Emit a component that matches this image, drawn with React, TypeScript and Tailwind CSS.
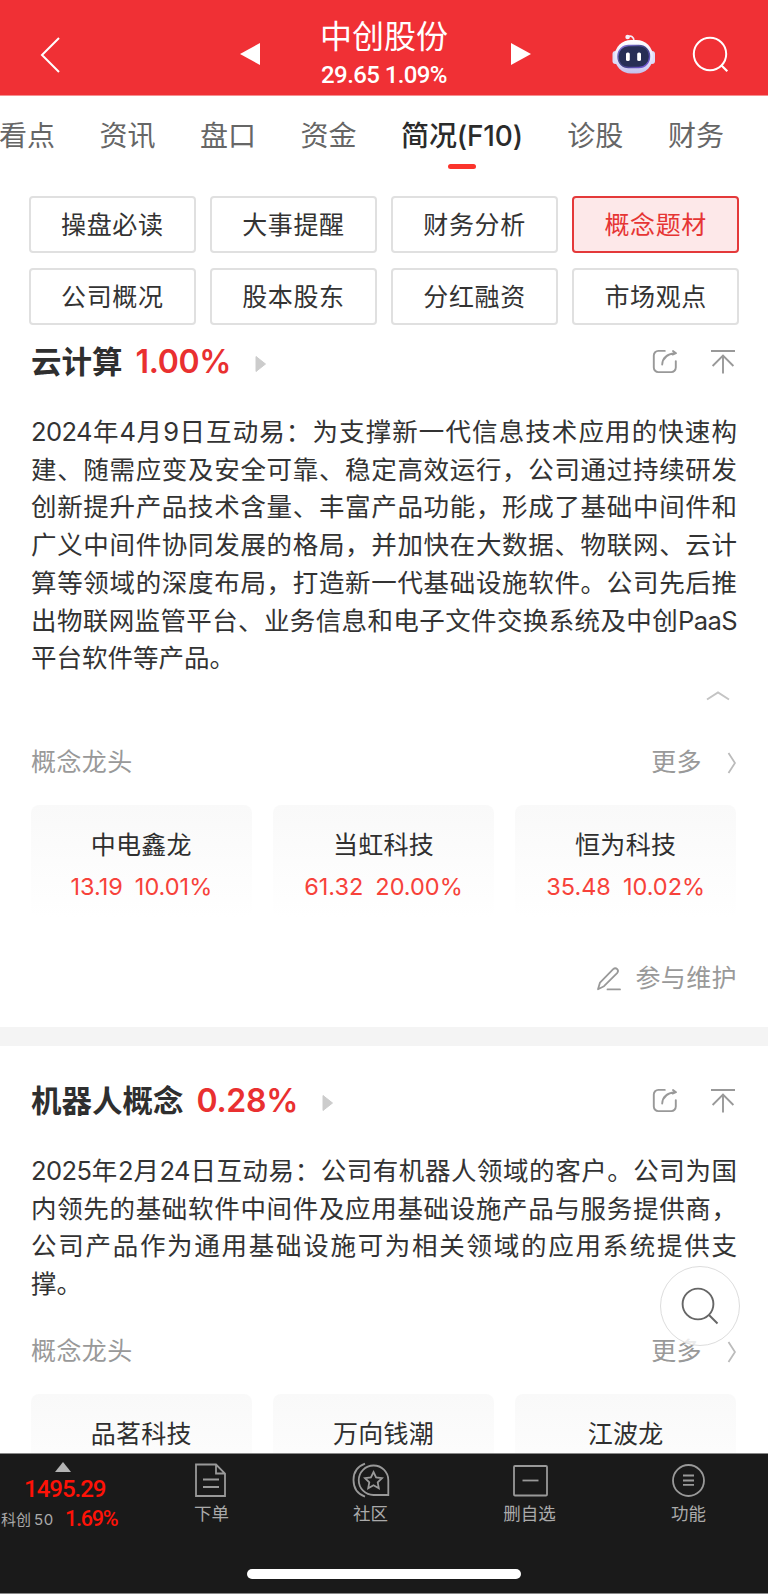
import clsx from 'clsx'
import { ReactNode } from 'react'

interface Stock {
  name: string
  price?: string
  change?: string
}

interface ConceptProps {
  title: string
  change: string
  lines: string[]
  stocks: Stock[]
  collapsible?: boolean
}

const TABS = ['看点', '资讯', '盘口', '资金', '简况(F10)', '诊股', '财务']
const ACTIVE_TAB = '简况(F10)'

const FILTERS = [
  '操盘必读',
  '大事提醒',
  '财务分析',
  '概念题材',
  '公司概况',
  '股本股东',
  '分红融资',
  '市场观点',
]
const ACTIVE_FILTER = '概念题材'

const CLOUD_LINES = [
  '2024年4月9日互动易：为支撑新一代信息技术应用的快速构',
  '建、随需应变及安全可靠、稳定高效运行，公司通过持续研发',
  '创新提升产品技术含量、丰富产品功能，形成了基础中间件和',
  '广义中间件协同发展的格局，并加快在大数据、物联网、云计',
  '算等领域的深度布局，打造新一代基础设施软件。公司先后推',
  '出物联网监管平台、业务信息和电子文件交换系统及中创PaaS',
  '平台软件等产品。',
]

const ROBOT_LINES = [
  '2025年2月24日互动易：公司有机器人领域的客户。公司为国',
  '内领先的基础软件中间件及应用基础设施产品与服务提供商，',
  '公司产品作为通用基础设施可为相关领域的应用系统提供支',
  '撑。',
]

const CLOUD_STOCKS: Stock[] = [
  { name: '中电鑫龙', price: '13.19', change: '10.01%' },
  { name: '当虹科技', price: '61.32', change: '20.00%' },
  { name: '恒为科技', price: '35.48', change: '10.02%' },
]

const ROBOT_STOCKS: Stock[] = [
  { name: '品茗科技' },
  { name: '万向钱潮' },
  { name: '江波龙' },
]

function RobotIcon() {
  return (
    <svg width="44" height="42" viewBox="0 0 44 42" fill="none">
      <defs>
        <linearGradient id="shell" x1="0" y1="0" x2="0" y2="1">
          <stop offset="0" stopColor="#ffffff" />
          <stop offset="0.6" stopColor="#e4e2fa" />
          <stop offset="1" stopColor="#c3c0ec" />
        </linearGradient>
        <linearGradient id="rim" x1="0" y1="0" x2="1" y2="1">
          <stop offset="0" stopColor="#8f7be8" />
          <stop offset="0.5" stopColor="#3a3f78" />
          <stop offset="1" stopColor="#7d5be6" />
        </linearGradient>
      </defs>
      <path d="M16 4c3-2 6 0 6 4" stroke="#f3e9f6" strokeWidth="1.6" />
      <circle cx="15.6" cy="4" r="2.3" fill="#f6eef8" />
      <rect x="0.5" y="18" width="6" height="13" rx="3" fill="#dcdcf7" />
      <rect x="37" y="18" width="6" height="13" rx="3" fill="#dcdcf7" />
      <rect x="2.5" y="7" width="38.5" height="33.5" rx="16.5" fill="url(#shell)" />
      <rect x="6" y="12.5" width="31.5" height="22" rx="10.5" fill="#272e55" stroke="url(#rim)" strokeWidth="1.4" />
      <rect x="14" y="19.5" width="3.8" height="8.5" rx="1.6" fill="#fff" />
      <rect x="25.2" y="19.5" width="3.8" height="8.5" rx="1.6" fill="#fff" />
    </svg>
  )
}

function ShareIcon() {
  return (
    <svg width="26" height="26" viewBox="0 0 26 26" fill="none" stroke="#999" strokeWidth="1.9" strokeLinecap="round">
      <path d="M12.800 1.900H6.300a4.500 4.500 0 0 0-4.500 4.500v12.200a4.500 4.500 0 0 0 4.500 4.500h13a4.500 4.500 0 0 0 4.500-4.500v-6.500" />
      <path d="M10.200 15.500C10.600 9.400 15 5 23 4.200M21 2l3 2.200-3.400 1.300" strokeLinejoin="round" />
    </svg>
  )
}

function ToTopIcon() {
  return (
    <svg width="26" height="26" viewBox="0 0 26 26" fill="none" stroke="#999" strokeWidth="1.9">
      <path d="M1 2h24M13 6v18.500M2.600 17L13 6.600 23.400 17" />
    </svg>
  )
}

function PenIcon() {
  return (
    <svg width="26" height="26" viewBox="0 0 26 26" fill="none" stroke="#999" strokeWidth="1.800" strokeLinecap="round" strokeLinejoin="round">
      <path d="M2 23.200l2-6.600L17.200 3.200c1.300-1.200 3-1 4 0 1 1.100 1 2.700-.1 3.900L8 20.200z" />
      <path d="M11.500 23.400H24" />
    </svg>
  )
}

function Header() {
  return (
    <header className="flex h-[95.500px] shrink-0 items-center border-b border-[#f58f90] bg-[#f03035] text-white">
      <svg width="22" height="38" viewBox="0 0 22 38" fill="none" stroke="#fff" strokeWidth="2" className="ml-[39px] mt-[15px]">
        <path d="M20 2L3 19l17 17" />
      </svg>
      <svg width="21" height="24" viewBox="0 0 21 24" fill="#fff" className="ml-[179px] mt-[14px]">
        <path d="M0 12L20 1v22z" />
      </svg>
      <div className="ml-[42px] flex w-[162px] flex-col items-center pt-[14px]">
        <h1 className="text-[32px] leading-[40px]">中创股份</h1>
        <p className="mt-[1px] font-[Roboto] text-2xl font-medium leading-[34px] tracking-[-0.600px] whitespace-nowrap">
          29.65 1.09%
        </p>
      </div>
      <svg width="21" height="24" viewBox="0 0 21 24" fill="#fff" className="ml-[45px] mt-[14px]">
        <path d="M21 12L1 1v22z" />
      </svg>
      <div className="ml-[81px] mt-[13px]">
        <RobotIcon />
      </div>
      <svg width="38" height="38" viewBox="0 0 38 38" fill="none" stroke="#fff" className="ml-[36px] mt-[15px]">
        <circle cx="18" cy="18" r="16.200" strokeWidth="2" />
        <path d="M29 29l6.300 6.200" strokeWidth="2.200" />
      </svg>
    </header>
  )
}

function TabBar() {
  return (
    <nav className="-ml-px flex h-[100.500px] shrink-0 gap-[44.500px] pt-[20.500px]">
      {TABS.map((tab) => (
        <div key={tab} className="flex flex-col items-center">
          <span
            className={clsx(
              'text-[28px] leading-[40px] whitespace-nowrap',
              tab === ACTIVE_TAB ? 'font-medium tracking-[-0.150px] text-[#2b2b2b]' : 'text-[#666]'
            )}
          >
            {tab}
          </span>
          {tab === ACTIVE_TAB && <span className="mt-[8px] h-[5px] w-7 rounded-full bg-[#fb342c]" />}
        </div>
      ))}
    </nav>
  )
}

function Filters() {
  return (
    <div className="grid shrink-0 grid-cols-4 gap-x-[14.500px] gap-y-[15px] px-[29px]">
      {FILTERS.map((filter) => (
        <button
          key={filter}
          className={clsx(
            'h-[57px] rounded-[4px] border-2 pt-[2px] text-[25px] tracking-[0.600px]',
            filter === ACTIVE_FILTER
              ? 'border-[#e4393a] bg-[#fde8e9] text-[#e63534]'
              : 'border-[#e0e0e0] bg-white text-[#333]'
          )}
        >
          {filter}
        </button>
      ))}
    </div>
  )
}

function StockCard({ name, price, change }: Stock) {
  return (
    <div className="flex h-[113px] flex-col items-center rounded-lg bg-gradient-to-b from-[#f9f9f9] to-white pt-5">
      <span className="text-[25px] leading-[40px] tracking-[0.300px] text-[#2f2f2f]">{name}</span>
      {price && (
        <span className="mt-[2px] flex gap-3 text-[23.500px] leading-[40px] text-[#f7423a]">
          <span>{price}</span>
          <span>{change}</span>
        </span>
      )}
    </div>
  )
}

// latin runs are set slightly tighter than the surrounding hanzi
function Line({ text, last }: { text: string; last: boolean }) {
  return (
    <p className={clsx('whitespace-nowrap', !last && '[text-align-last:justify]')}>
      {text.split(/([0-9A-Za-z]+)/).map((part, i) =>
        i % 2 ? (
          <span key={i} className="tracking-[-0.600px]">
            {part}
          </span>
        ) : (
          part
        )
      )}
    </p>
  )
}

function Concept({ title, change, lines, stocks, collapsible }: ConceptProps) {
  return (
    <section className="shrink-0 pl-[31px] pr-8">
      <div className="flex h-10 items-center">
        <h2 className="mt-[2px] text-[30.500px] font-semibold leading-[40px] text-[#2f2f2f]">{title}</h2>
        <span className="ml-[13px] mt-[2px] text-[32px] font-semibold leading-[40px] tracking-[-0.300px] text-[#e93030]">
          {change}
        </span>
        <svg width="12" height="18" viewBox="0 0 12 18" fill="#ccc" stroke="#ccc" strokeLinejoin="round" className="ml-[24px] mt-[6px]">
          <path d="M1 1.500v15L10.500 9z" />
        </svg>
        <div className="ml-auto mt-[2px] flex gap-[32px]">
          <ShareIcon />
          <ToTopIcon />
        </div>
      </div>
      <div className="-mr-px mt-[32px] text-[25.500px] leading-[37.700px] text-[#333]">
        {lines.map((line, i) => (
          <Line key={line} text={line} last={i === lines.length - 1} />
        ))}
      </div>
      {collapsible ? (
        <div className="flex h-[66.100px] justify-end pr-[6px] pt-[14px]">
          <svg width="24" height="10" viewBox="0 0 24 10" fill="none" stroke="#c4c4c4" strokeWidth="2">
            <path d="M1 8.500L12 1.500l11 7" />
          </svg>
        </div>
      ) : (
        <div className="h-[29px]" />
      )}
      <div className="flex h-10 items-center text-[25px] tracking-[0.400px] text-[#999]">
        <span>概念龙头</span>
        <span className="ml-auto">更多</span>
        <svg width="10" height="22" viewBox="0 0 10 22" fill="none" stroke="#bbb" strokeWidth="1.800" className="ml-[24px]">
          <path d="M2.500 1L9 11 2.500 21" />
        </svg>
      </div>
      <div className="mt-[22px] grid grid-cols-3 gap-[21.500px]">
        {stocks.map((stock) => (
          <StockCard key={stock.name} {...stock} />
        ))}
      </div>
    </section>
  )
}

function NavItem({ label, children }: { label: string; children: ReactNode }) {
  return (
    <div className="flex flex-1 flex-col items-center text-[#aaa]">
      <svg width="38" height="36" viewBox="0 0 38 36" fill="none" stroke="#999" strokeWidth="1.800" className="mt-[8px]">
        {children}
      </svg>
      <span className="mt-[4px] text-[17.500px] leading-6">{label}</span>
    </div>
  )
}

function BottomBar() {
  return (
    <footer className="flex h-[141px] shrink-0 flex-col border-y border-[#888] bg-[#1a1a1a]">
      <div className="flex">
        <div className="flex w-[132px] flex-col font-[Roboto] font-medium text-[#ff1207]">
          <svg width="16" height="10" viewBox="0 0 16 10" fill="#b4b4b4" className="ml-[55px] mt-[8px]">
            <path d="M8 0l8 10H0z" />
          </svg>
          <span className="ml-[24px] mt-[3px] text-2xl leading-[28px] tracking-[-1px]">1495.29</span>
          <div className="flex items-center whitespace-nowrap">
            <span className="w-[65px] pl-px pt-[3px] font-[Inter,'Noto_Sans_CJK_SC',sans-serif] text-[15px] font-normal leading-[28px] text-[#aaa]">
              科创<span className="ml-[3px] tracking-[0.500px]">50</span>
            </span>
            <span className="text-[21.500px] leading-[28px] tracking-[-1.200px]">1.69%</span>
          </div>
        </div>
        <NavItem label="下单">
          <path d="M3 2.500h20l9 9v22.500H3zM23 2.500v9h9M10 17.500h16M10 25h16" />
        </NavItem>
        <NavItem label="社区">
          <path d="M13 1.600C5 4.500 1.500 11 1.500 18s3.500 13.800 11.500 16.600" />
          <path d="M21.500 3.500a14.700 14.700 0 1 0 0 29.500H36.300V18A14.700 14.700 0 0 0 21.500 3.500z" />
          <path d="M21.500 10l2.600 5.400 5.900.8-4.300 4.100 1.100 5.900-5.300-2.900-5.300 2.900 1.100-5.900-4.300-4.100 5.900-.8z" />
        </NavItem>
        <NavItem label="删自选">
          <rect x="3" y="4" width="33" height="29.500" rx="1" />
          <path d="M11.500 18.500h16" />
        </NavItem>
        <NavItem label="功能">
          <circle cx="18.500" cy="18.500" r="15.500" />
          <path d="M13 13.500h11M13 18.500h11M13 22.800h11" />
        </NavItem>
      </div>
      <div className="mb-[14px] mt-auto ml-[247px] h-[10px] w-[274px] rounded-full bg-white" />
    </footer>
  )
}

export default function App() {
  return (
    <div className="relative flex h-[1594px] w-[768px] flex-col overflow-hidden bg-white font-[Inter,'Noto_Sans_CJK_SC',sans-serif]">
      <Header />
      <main className="flex min-h-0 flex-1 flex-col overflow-hidden">
        <TabBar />
        <Filters />
        <div className="h-4 shrink-0" />
        <Concept title="云计算" change="1.00%" lines={CLOUD_LINES} stocks={CLOUD_STOCKS} collapsible />
        <div className="mt-[41px] flex h-10 shrink-0 items-center justify-end gap-[13px] pr-[31px] text-[25px] tracking-[0.400px] text-[#999]">
          <PenIcon />
          参与维护
        </div>
        <div className="mb-[34px] mt-[28px] h-[19px] shrink-0 bg-[#f4f4f4]" />
        <Concept title="机器人概念" change="0.28%" lines={ROBOT_LINES} stocks={ROBOT_STOCKS} />
      </main>
      <BottomBar />
      <button className="absolute left-[660px] top-[1266px] flex size-20 items-center justify-center rounded-full border border-[#ddd] bg-white/80">
        <svg width="38" height="38" viewBox="0 0 38 38" fill="none" stroke="#666" strokeWidth="1.900">
          <circle cx="17" cy="17" r="15.400" />
          <path d="M28 28l8.500 8.500" />
        </svg>
      </button>
    </div>
  )
}
